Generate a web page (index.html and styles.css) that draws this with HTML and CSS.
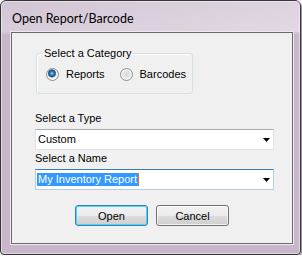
FILE: index.html
```html
<!DOCTYPE html>
<html lang="en">
<head>
    <meta charset="UTF-8">
    <title>Open Report/Barcode</title>
    <link rel="stylesheet" href="styles.css">
</head>
<body>

    <div class="window">
        <div class="titlebar">Open Report/Barcode</div>

        <div class="client">
            <!-- category -->
            <fieldset class="group">
                <legend>Select a Category</legend>
                <div class="radios">
                    <label class="option"><span class="radio checked"></span>Reports</label>
                    <label class="option"><span class="radio"></span>Barcodes</label>
                </div>
            </fieldset>

            <!-- type / name -->
            <div class="field-label">Select a Type</div>
            <div class="combo">
                <span class="combo-text">Custom</span>
                <svg class="arrow" width="7" height="4" viewBox="0 0 7 4"><polygon points="0,0 7,0 3.5,4" fill="#000"/></svg>
            </div>

            <div class="field-label second">Select a Name</div>
            <div class="combo focused">
                <span class="combo-text selection">My Inventory Report</span>
                <svg class="arrow" width="7" height="4" viewBox="0 0 7 4"><polygon points="0,0 7,0 3.5,4" fill="#000"/></svg>
            </div>

            <div class="buttons">
                <button class="btn default">Open</button>
                <button class="btn">Cancel</button>
            </div>
        </div>
    </div>

</body>
</html>
```

FILE: styles.css
```css
/* --- colours --- */
:root {
    --frame-top: #d2c5d5;
    --frame: #c8b7cb;
    --frame-light: #efe8ef;
    --client-bg: #f0f0f0;
    --client-edge: #6b6b6b;
    --group-border: #d5dfe5;
    --combo-border: #abadb3;
    --focus-border: #569de5;
    --select-bg: #3399ff;
}

/* --- base --- */
body {
    margin: 0;
    background: #ffffff;
    font-family: "Liberation Sans", Arial, sans-serif;
    font-size: 11px;
    color: #000;
}

/* --- window frame --- */
.window {
    width: 301px;
    height: 255px;
    box-sizing: border-box;
    border: 1px solid #363636;
    border-radius: 6px 6px 4px 4px;
    background: linear-gradient(to bottom, var(--frame-top) 0, #d8ccda 30px, var(--frame) 34px, var(--frame) 100%);
    box-shadow: inset 0 0 0 1px rgba(255,255,255,0.45), 1px 1px 1px rgba(0,0,0,0.45);
    padding: 0 7px 10px 10px;
    display: flex;
    flex-direction: column;
}

.titlebar {
    height: 31px;
    box-sizing: border-box;
    padding: 10px 0 0 1px;
    font-family: Lato, "Liberation Sans", sans-serif;
    font-size: 12.5px;
    line-height: 15px;
    color: #000;
    background: linear-gradient(to right, transparent, rgba(255,255,255,0.25));
    margin: 0 -7px 0 -10px;
    padding-left: 11px;
}

.client {
    flex: 1;
    background: var(--client-bg);
    border: 1px solid var(--client-edge);
    box-shadow: 0 0 0 1px var(--frame-light);
    display: flex;
    flex-direction: column;
    align-items: flex-start;
}

/* --- group box --- */
.group {
    margin: 14px 0 0 24px;
    width: 157px;
    box-sizing: border-box;
    padding: 0;
    border: 1px solid var(--group-border);
    border-radius: 3px;
    box-shadow: inset 1px 1px 0 #fff;
}

.group legend {
    margin-left: 5px;
    padding: 0 2px;
    line-height: 13px;
}

.radios {
    display: flex;
    padding: 8px 0 12px 9px;
    gap: 15px;
}

.option {
    display: flex;
    align-items: center;
    gap: 7px;
    line-height: 13px;
}

.radio {
    width: 13px;
    height: 13px;
    box-sizing: border-box;
    border-radius: 50%;
    border: 1px solid #8e8f8f;
    background: radial-gradient(circle at 50% 50%, #d6d6d6 0, #e4e4e4 3px, #f6f6f6 5.5px);
}

.radio.checked {
    background: radial-gradient(circle at 45% 40%, #9fd9fb 0, #3a8fd0 1.5px, #1a4f86 3.2px, #5d7a96 3.8px, #e8e8e8 4.4px, #f6f6f6 5.5px);
}

/* --- combos --- */
.field-label {
    margin: 18px 0 0 23px;
    line-height: 13px;
}

.field-label.second {
    margin-top: 2px;
}

.combo {
    margin: 4px 0 0 23px;
    width: 239px;
    height: 21px;
    box-sizing: border-box;
    border: 1px solid #e2e3ea;
    border-top-color: var(--combo-border);
    background: #fff;
    display: flex;
    align-items: center;
    justify-content: space-between;
    padding: 0 3px 0 1px;
}

.combo.focused {
    border-color: #b5cfe7;
    border-top-color: #3d7bad;
}

.combo-text {
    padding: 0 1px;
    line-height: 13px;
}

.selection {
    background: var(--select-bg);
    color: #fff;
    border-right: 1px solid #e07a2a;
}

.arrow {
    display: block;
}

/* --- buttons --- */
.buttons {
    align-self: stretch;
    display: flex;
    justify-content: center;
    gap: 8px;
    margin-top: 15px;
}

.btn {
    width: 73px;
    height: 21px;
    box-sizing: border-box;
    border: 1px solid #707070;
    border-radius: 3px;
    background: linear-gradient(to bottom, #f2f2f2 0%, #ebebeb 50%, #dddddd 51%, #cfcfcf 100%);
    box-shadow: inset 0 0 0 1px rgba(255,255,255,0.7);
    font-family: "Liberation Sans", Arial, sans-serif;
    font-size: 11px;
    color: #000;
    padding: 0;
}

.btn.default {
    border-color: #3c7fb1;
    box-shadow: inset 0 0 0 1px #48d7f8;
}
```
